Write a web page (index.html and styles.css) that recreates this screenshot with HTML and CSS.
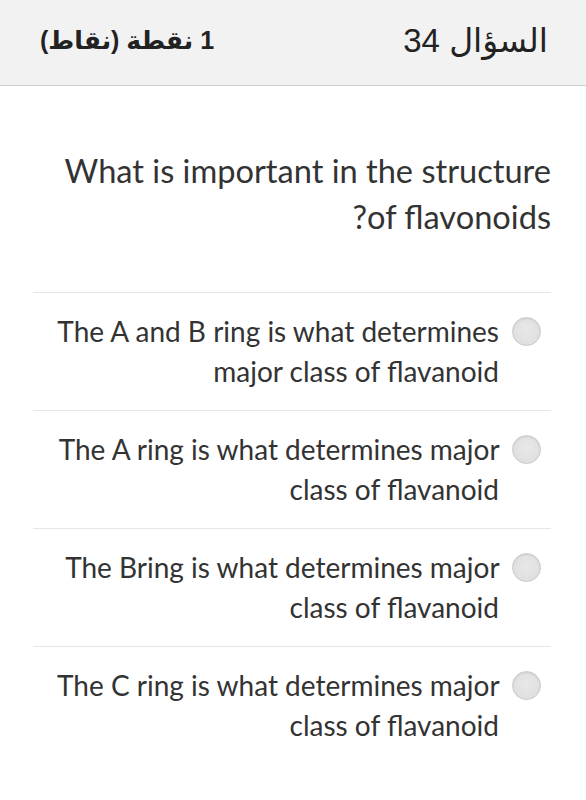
FILE: index.html
```html
<!DOCTYPE html>
<html lang="ar" dir="rtl">
<head>
<meta charset="utf-8">
<link rel="stylesheet" href="styles.css">
</head>
<body>
<header class="head">
  <div class="q-num">السؤال 34</div>
  <div class="q-pts">1 نقطة (نقاط)</div>
</header>
<main class="content">
  <div class="question">What is important in the structure of flavonoids?</div>
  <ul class="options">
    <li class="option"><span class="radio"></span><span class="label">The A and B ring is what determines major class of flavanoid</span></li>
    <li class="option"><span class="radio"></span><span class="label">The A ring is what determines major class of flavanoid</span></li>
    <li class="option"><span class="radio"></span><span class="label">The Bring is what determines major class of flavanoid</span></li>
    <li class="option"><span class="radio"></span><span class="label">The C ring is what determines major class of flavanoid</span></li>
  </ul>
</main>
</body>
</html>
```

FILE: styles.css
```css
html, body {
  margin: 0;
  padding: 0;
  background: #ffffff;
}
body {
  width: 586px;
  height: 800px;
  overflow: hidden;
  color: #333333;
}
.head {
  height: 86px;
  background: #f2f2f2;
  border-bottom: 1px solid #cfcfcf;
  display: flex;
  align-items: center;
  justify-content: space-between;
  padding: 0 38px 4px 40px;
  box-sizing: border-box;
  font-family: "Liberation Sans", "DejaVu Sans", sans-serif;
  color: #222222;
}
.q-num {
  font-size: 33px;
}
.q-pts {
  font-size: 25px;
  font-weight: bold;
}
.content {
  padding: 0 35px 0 33px;
  font-family: Lato, "Open Sans", sans-serif;
}
.question {
  margin-top: 62px;
  margin-bottom: 52px;
  font-size: 32.6px;
  line-height: 46px;
  padding-left: 20px;
}
.options {
  list-style: none;
  margin: 0;
  padding: 0;
}
.option {
  border-top: 1px solid #e6e6e6;
  display: flex;
  align-items: flex-start;
  gap: 13px;
  padding: 18px 10px 19px 6px;
}
.label {
  font-size: 28px;
  line-height: 40px;
}
.radio {
  flex: none;
  width: 27px;
  height: 27px;
  margin-top: 6px;
  border-radius: 50%;
  background: radial-gradient(circle at 50% 45%, #e8e8e8 0%, #dcdcdc 100%);
  border: 1px solid #c9c9c9;
  box-shadow: inset 0 1px 2px rgba(0,0,0,0.08);
}
```
